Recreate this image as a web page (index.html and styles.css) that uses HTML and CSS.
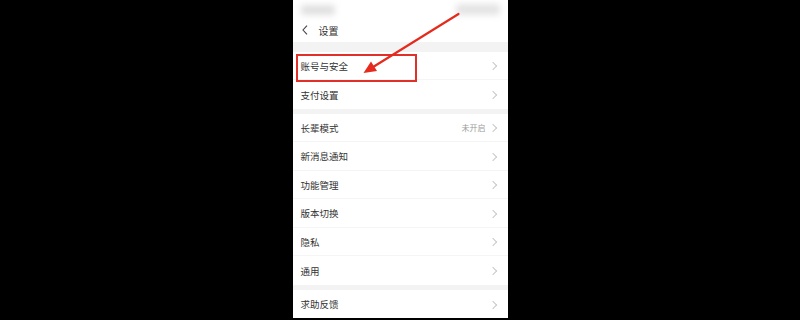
FILE: index.html
```html
<!DOCTYPE html>
<html lang="zh">
<head>
<meta charset="utf-8">
<link rel="stylesheet" href="styles.css">
</head>
<body>
<div class="stage">
  <div class="phone">
    <div class="status">
      <div class="blur blur-left"></div>
      <div class="blur blur-right"></div>
    </div>
    <div class="header">
      <svg class="back" viewBox="0 0 6 10" width="6" height="10"><path d="M5 0.7 L1 5 L5 9.3" fill="none" stroke="#444" stroke-width="1.1"/></svg>
      <span class="title">设置</span>
    </div>
    <div class="band band-top"></div>
    <div class="group">
      <div class="row"><span class="label">账号与安全</span><span class="chev"></span></div>
      <div class="row"><span class="label">支付设置</span><span class="chev"></span></div>
    </div>
    <div class="band"></div>
    <div class="group">
      <div class="row"><span class="label">长辈模式</span><span class="value">未开启</span><span class="chev"></span></div>
      <div class="row"><span class="label">新消息通知</span><span class="chev"></span></div>
      <div class="row"><span class="label">功能管理</span><span class="chev"></span></div>
      <div class="row"><span class="label">版本切换</span><span class="chev"></span></div>
      <div class="row"><span class="label">隐私</span><span class="chev"></span></div>
      <div class="row"><span class="label">通用</span><span class="chev"></span></div>
    </div>
    <div class="band"></div>
    <div class="group">
      <div class="row"><span class="label">求助反馈</span><span class="chev"></span></div>
    </div>
    <div class="highlight"></div>
    <svg class="arrow" viewBox="292.5 0 215 318" width="215" height="318">
      <line x1="458" y1="14" x2="371" y2="68" stroke="#e42b1e" stroke-width="2.2" stroke-linecap="round"/>
      <polygon points="363,73 376.5,71 370.5,61.5" fill="#e42b1e"/>
    </svg>
  </div>
</div>
</body>
</html>
```
FILE: styles.css
```css
html, body {
  margin: 0;
  padding: 0;
  background: #000;
}
body {
  width: 800px;
  height: 320px;
  overflow: hidden;
  font-family: "Noto Sans CJK SC", "Noto Sans", sans-serif;
}
.stage {
  display: flex;
  justify-content: center;
  width: 800px;
  height: 320px;
}
.phone {
  position: relative;
  width: 215px;
  height: 318px;
  background: #fff;
  overflow: hidden;
  display: flex;
  flex-direction: column;
}
.status {
  height: 18px;
  display: flex;
  justify-content: space-between;
  align-items: flex-start;
  padding: 4px 8px 0 8px;
  box-sizing: border-box;
}
.blur {
  filter: blur(3px);
  border-radius: 3px;
}
.blur-left {
  width: 34px;
  height: 10px;
  margin-top: 1px;
  background: #e0e0e0;
}
.blur-right {
  width: 44px;
  height: 11px;
  background: #e4e4e4;
}
.header {
  height: 24px;
  display: flex;
  align-items: center;
  padding-left: 9px;
  gap: 11px;
}
.back {
  display: block;
}
.title {
  font-size: 10px;
  color: #333;
  line-height: 1;
  margin-top: 2px;
}
.band {
  height: 5px;
  background: #f3f3f3;
  flex: none;
}
.band-top {
  height: 10px;
}
.group {
  display: flex;
  flex-direction: column;
}
.row {
  height: 28.5px;
  display: flex;
  align-items: center;
  padding: 2px 11px 0 8px;
  box-sizing: border-box;
  border-bottom: 1px solid #f5f5f5;
  flex: none;
}
.row:last-child {
  border-bottom: none;
}
.label {
  font-size: 9.5px;
  color: #333;
  line-height: 1;
  flex: 1;
}
.value {
  font-size: 8px;
  color: #9a9a9a;
  line-height: 1;
  margin-right: 4px;
}
.chev {
  width: 5px;
  height: 5px;
  border-top: 1px solid #c8c8c8;
  border-right: 1px solid #c8c8c8;
  transform: rotate(45deg);
  margin-right: 1px;
}
.highlight {
  position: absolute;
  left: 3.5px;
  top: 54px;
  width: 121px;
  height: 28px;
  border: 2px solid #e1302a;
  box-sizing: border-box;
}
.arrow {
  position: absolute;
  left: 0;
  top: 0;
}
```
